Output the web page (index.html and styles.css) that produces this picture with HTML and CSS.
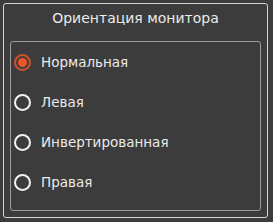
FILE: index.html
```html
<!DOCTYPE html>
<html lang="ru">
<head>
  <meta charset="UTF-8">
  <title>Ориентация монитора</title>
  <link rel="stylesheet" href="styles.css">
</head>
<body>
  <div class="panel">
    <h1 class="title">Ориентация монитора</h1>
    <div class="group">
      <div class="option checked">
        <span class="radio"></span>
        <span class="label">Нормальная</span>
      </div>
      <div class="option">
        <span class="radio"></span>
        <span class="label">Левая</span>
      </div>
      <div class="option">
        <span class="radio"></span>
        <span class="label">Инвертированная</span>
      </div>
      <div class="option">
        <span class="radio"></span>
        <span class="label">Правая</span>
      </div>
    </div>
  </div>
</body>
</html>
```

FILE: styles.css
```css
html, body {
  margin: 0;
  padding: 0;
  background-color: #3c3c3c;
}

body {
  font-family: 'DejaVu Sans', sans-serif;
  color: #ebebeb;
  width: 273px;
  height: 222px;
  padding: 3px;
  box-sizing: border-box;
}

.panel {
  width: 265px;
  height: 215px;
  box-sizing: border-box;
  border: 1px solid #d4d4d4;
  border-radius: 3px;
  padding: 0 6px;
}

.title {
  margin: 0;
  height: 37px;
  line-height: 29px;
  font-size: 14px;
  font-weight: normal;
  text-align: center;
}

.group {
  height: 170px;
  box-sizing: border-box;
  border: 1px solid #9c9c9c;
  border-radius: 3px;
  padding: 0 3px;
}

.option {
  display: flex;
  align-items: center;
  height: 40px;
  gap: 10px;
}

.radio {
  width: 17px;
  height: 17px;
  box-sizing: border-box;
  border: 2px solid #f2f2f2;
  border-radius: 50%;
  display: flex;
  align-items: center;
  justify-content: center;
}

.checked .radio {
  border-color: #c9532c;
}

.checked .radio::after {
  content: "";
  width: 9px;
  height: 9px;
  border-radius: 50%;
  background-color: #f0552a;
}

.label {
  font-size: 13.5px;
}
```
